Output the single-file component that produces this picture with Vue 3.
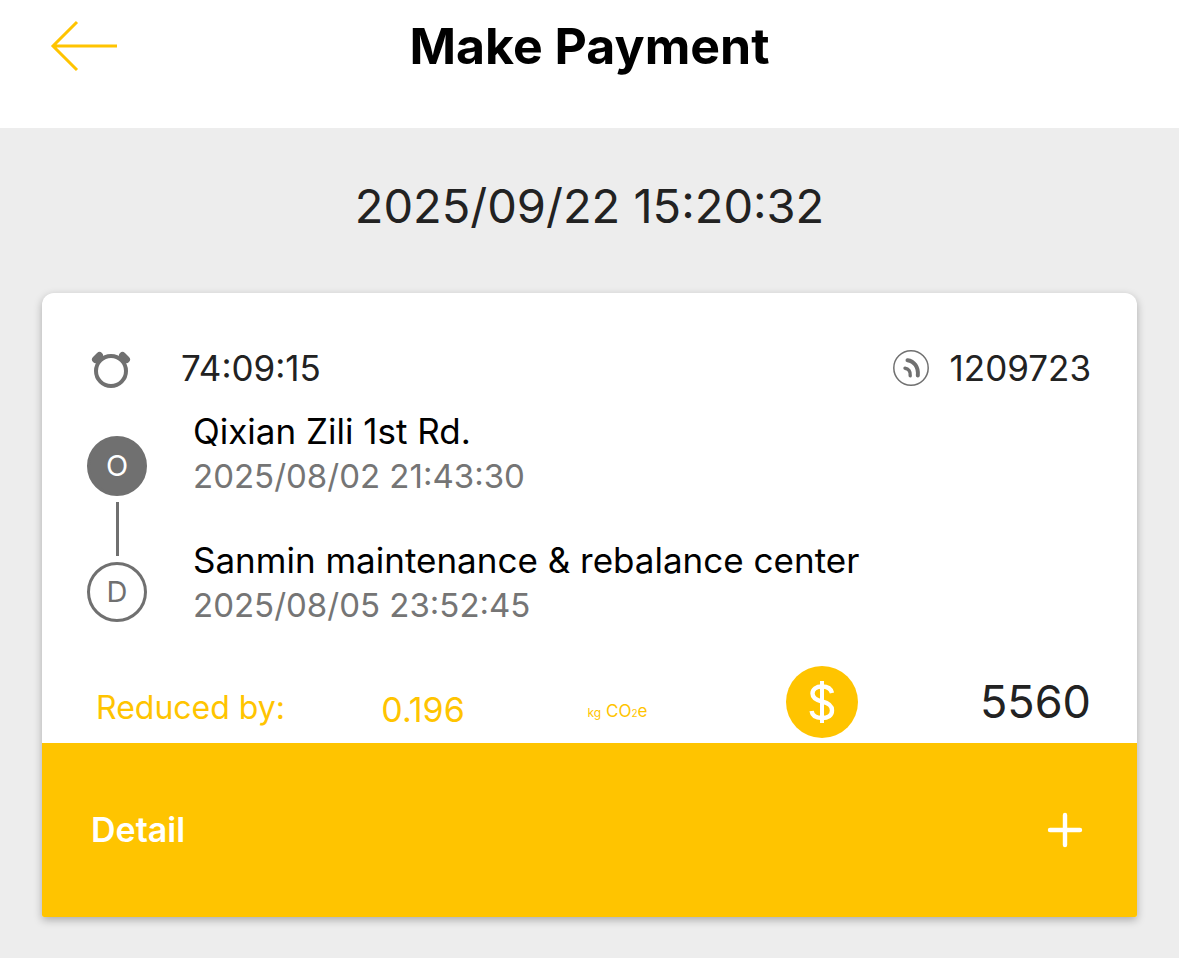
<script setup>
const trip = {
  paidAt: '2025/09/22 15:20:32',
  duration: '74:09:15',
  bike: '1209723',
  reduced: '0.196',
  amount: '5560',
}

const stops = [
  { mark: 'O', name: 'Qixian Zili 1st Rd.', time: '2025/08/02 21:43:30' },
  { mark: 'D', name: 'Sanmin maintenance & rebalance center', time: '2025/08/05 23:52:45' },
]
</script>

<template>
  <div class="page">
    <header class="bar">
      <button class="back" type="button" aria-label="Back">
        <svg width="68" height="52" viewBox="0 0 68 52" fill="none" stroke="#ffc400" stroke-width="3">
          <path d="M27 2 L3 26 L27 50 M3 26 H67" />
        </svg>
      </button>
      <h1 class="title">Make Payment</h1>
    </header>

    <main class="content">
      <p class="stamp">{{ trip.paidAt }}</p>

      <section class="card">
        <div class="top">
          <svg class="clock" width="40" height="40" viewBox="0 0 40 40">
            <path d="M4.500 11.500 L8.500 7.500 M35.500 11.500 L31.500 7.500" stroke="#707070" stroke-width="7" stroke-linecap="round" />
            <path d="M8 10 L13 15 M32 10 L27 15" stroke="#707070" stroke-width="7" />
            <circle cx="20" cy="23" r="15" fill="#fff" stroke="#707070" stroke-width="4" />
          </svg>
          <span class="duration">{{ trip.duration }}</span>
          <svg class="signal" width="38" height="38" viewBox="0 0 38 38" fill="none" stroke="#707070" stroke-linecap="round">
            <circle cx="19" cy="19" r="17.2" stroke-width="1.5" />
            <path d="M15.500 11.200 C22 12 26.700 18 25.800 26.500" stroke-width="4" />
            <path d="M13 19.200 C16.500 19.500 18.700 22.300 18.200 26.800" stroke-width="3.400" />
          </svg>
          <span class="bike">{{ trip.bike }}</span>
        </div>

        <div class="route">
          <div class="rail" aria-hidden="true">
            <span class="mark filled">{{ stops[0].mark }}</span>
            <span class="link"></span>
            <span class="mark">{{ stops[1].mark }}</span>
          </div>
          <ul class="stops">
            <li v-for="stop in stops" :key="stop.mark">
              <div class="name">{{ stop.name }}</div>
              <div class="time">{{ stop.time }}</div>
            </li>
          </ul>
        </div>

        <div class="summary">
          <span class="label">Reduced by:</span>
          <span class="value">{{ trip.reduced }}</span>
          <span class="unit"><small>kg</small> CO<small class="two">2</small>e</span>
          <svg width="72" height="72" viewBox="0 0 72 72" fill="none" stroke="#fff">
            <circle cx="36" cy="36" r="36" fill="#ffc400" stroke="none" />
            <path d="M36 15 V57" stroke-width="4" />
            <path d="M46 27 C45 22.500 41 20.500 36 20.500 C30 20.500 26.500 23.500 26.500 27.500 C26.500 32 30 34 36 35.500 C43 37.200 46 39.500 46 44.500 C46 49.500 42 52 36 52 C30 52 26.200 49.500 25.600 45" stroke-width="4.400" />
          </svg>
          <span class="amount">{{ trip.amount }}</span>
        </div>

        <button class="detail" type="button">
          <span>Detail</span>
          <svg width="36" height="36" viewBox="0 0 36 36" stroke="#fff" stroke-width="4.400" stroke-linecap="round">
            <path d="M18 3 V33 M3 18 H33" />
          </svg>
        </button>
      </section>
    </main>
  </div>
</template>

<style>
body {
  background: #ededed;
}
</style>

<style scoped>
.page {
  font-family: Inter, "Liberation Sans", sans-serif;
  color: #222;
  background: #ededed;
  font-size: 35px;
  line-height: 44px;
}

.bar {
  display: grid;
  grid-template-columns: 68px 1fr 68px;
  align-items: center;
  padding: 16px 50px 52px;
  background: #fff;
}

.back {
  display: flex;
  padding: 0;
  border: 0;
  background: none;
}

.title {
  margin: 0;
  color: #000;
  font-size: 50px;
  font-weight: 700;
  line-height: 60px;
  text-align: center;
}

.content {
  padding: 48px 42px 40px;
}

.stamp {
  margin: 0 0 57px;
  font-size: 47px;
  line-height: 60px;
  text-align: center;
}

.card {
  background: #fff;
  border-radius: 12px 12px 2px 2px;
  box-shadow: 0 3px 8px rgba(0, 0, 0, 0.28);
}

.top {
  display: flex;
  align-items: center;
  padding: 53px 46px 0 49px;
}

.duration {
  flex: 1;
  margin-left: 50px;
}

.bike {
  margin-left: 20px;
}

.route {
  display: flex;
  gap: 46px;
  padding: 19px 45px 0;
}

.rail {
  display: flex;
  flex-direction: column;
  align-items: center;
  gap: 6px;
  padding-top: 27px;
}

.mark {
  box-sizing: border-box;
  width: 60px;
  height: 60px;
  border: 3px solid #707070;
  border-radius: 50%;
  color: #707070;
  font-size: 29px;
  line-height: 54px;
  text-align: center;
}

.filled {
  background: #707070;
  color: #fff;
}

.link {
  width: 3px;
  height: 54px;
  background: #707070;
}

.stops {
  display: flex;
  flex-direction: column;
  gap: 39px;
  margin: 0;
  padding: 0;
  list-style: none;
}

.name {
  color: #000;
}

.time {
  color: #757575;
  font-size: 33px;
  line-height: 46px;
}

.summary {
  display: grid;
  grid-template-columns: 285fr 206fr 198fr 72px 233fr;
  align-items: center;
  padding: 38px 46px 5px 54px;
  color: #ffc400;
}

.label {
  padding-top: 12px;
  font-size: 32px;
}

.value {
  padding-top: 16px;
  font-size: 34px;
}

.unit {
  padding-top: 20px;
  font-size: 17px;
}

.unit small {
  font-size: 12px;
}

.unit .two {
  font-size: 10px;
}

.amount {
  color: #222;
  font-size: 45px;
  text-align: right;
}

.detail {
  display: flex;
  justify-content: space-between;
  align-items: center;
  width: 100%;
  padding: 65px 54px 65px 49px;
  border: 0;
  border-radius: 0 0 2px 2px;
  background: #ffc400;
  color: #fff;
  font: 600 34px/44px Inter, "Liberation Sans", sans-serif;
}
</style>
